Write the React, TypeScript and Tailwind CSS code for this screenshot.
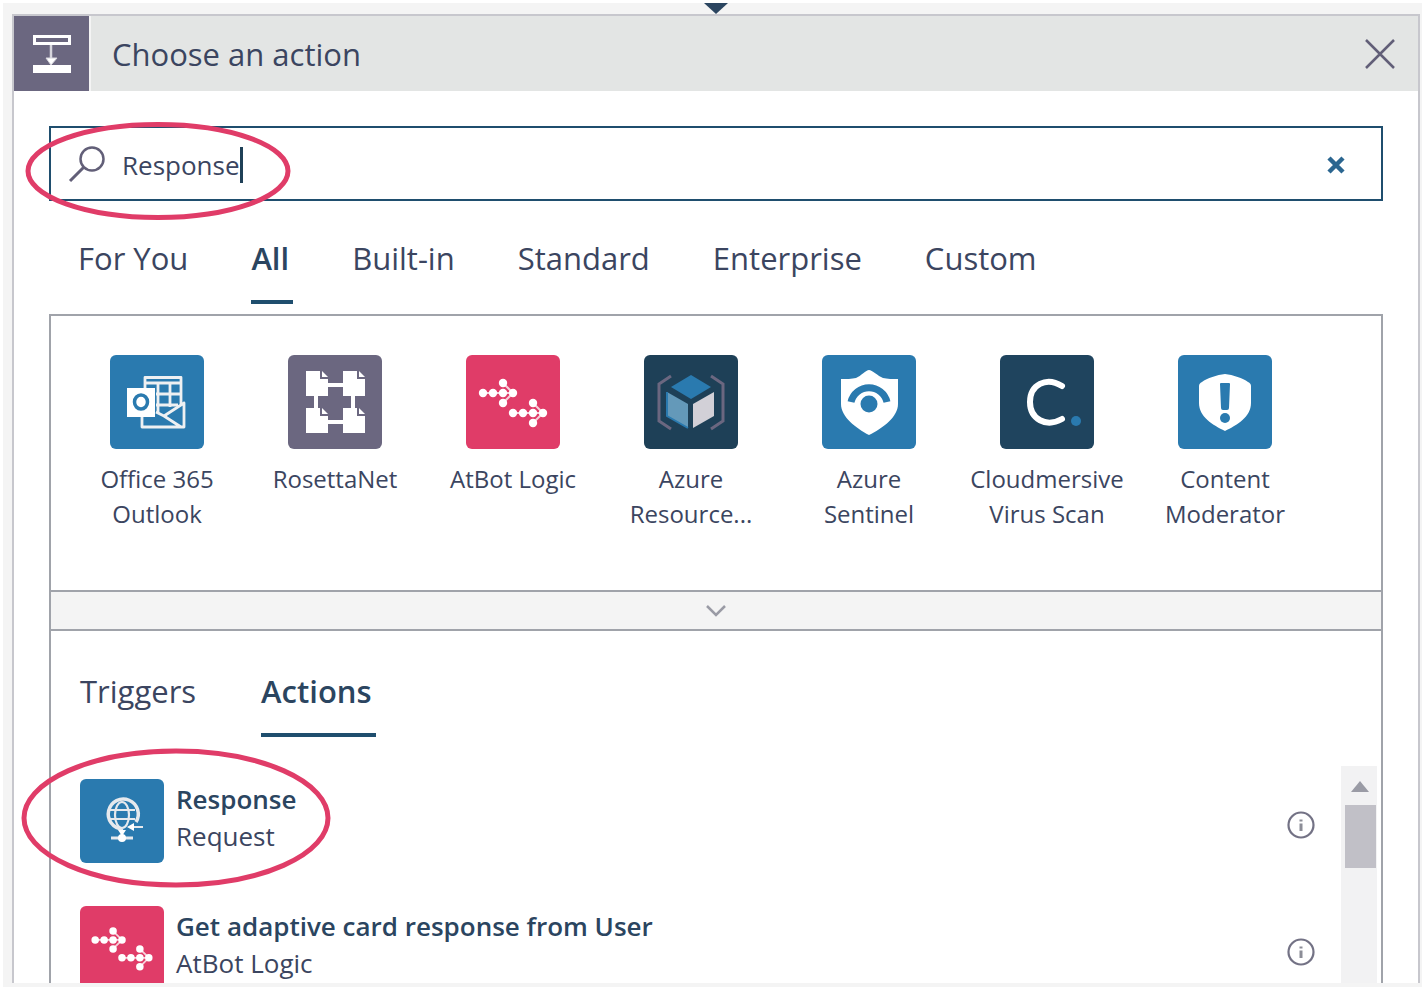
import { useState, type ReactNode } from "react";

const categories = ["For You", "All", "Built-in", "Standard", "Enterprise", "Custom"];

function AddStepIcon() {
  return (
    <svg viewBox="0 0 75 75" className="size-[75px]" fill="none" aria-hidden="true">
      <rect x="20.5" y="20.5" width="35" height="7" stroke="#fff" strokeWidth="3" />
      <path d="M37 29v15" stroke="#d6d5dc" strokeWidth="2.5" />
      <path d="M32 42h11l-6 7z" fill="#fff" stroke="#d6d5dc" />
      <path d="M19 49h38v8H19z" fill="#fff" />
    </svg>
  );
}

function OutlookIcon() {
  return (
    <svg viewBox="0 0 94 94" className="size-full" fill="none" aria-hidden="true">
      <g stroke="#eef0f2" strokeWidth="2.8" strokeLinejoin="round">
        <path d="M35 35V22.500h36V49" />
        <path d="M34 28h38M48 28v30M60 28v24M46 39h25M46 50h22" />
        <path d="M32 60v12h42V48L54 61l-8-4M54 61l17 11" />
      </g>
      <path d="M17 33h28v29H17z" fill="#fff" />
      <ellipse cx="31" cy="47" rx="6.500" ry="7" stroke="#2a7aaf" strokeWidth="3.500" />
    </svg>
  );
}

function RosettaIcon() {
  const pages = [
    [17, 16],
    [54, 16],
    [17, 53],
    [54, 53],
  ];
  return (
    <svg viewBox="0 0 94 94" className="size-full" fill="#fff" aria-hidden="true">
      <path d="M38 28h18v4H38zM38 65h18v4H38zM26 40h4v15h-4zM63 40h4v15h-4z" />
      {pages.map(([x, y]) => (
        <g key={`${x}-${y}`} transform={`translate(${x} ${y})`}>
          <path d="M1 0h14v8h8v17H1z" />
          <path d="M17 0l6 6h-6z" />
        </g>
      ))}
    </svg>
  );
}

function AtBotIcon() {
  const dots = [
    [17, 38],
    [27, 38],
    [37, 38],
    [47, 38],
    [37, 28],
    [37, 48],
    [47, 58],
    [57, 58],
    [67, 58],
    [77, 58],
    [67, 48],
    [67, 68],
  ];
  return (
    <svg viewBox="0 0 94 94" className="size-full" fill="none" aria-hidden="true">
      <path
        d="M17 38h30M37 28l10 10-10 10M47 58h30M67 48l10 10-10 10"
        stroke="#f6d3dc"
        strokeWidth="2"
      />
      {dots.map(([x, y]) => (
        <circle key={`${x}-${y}`} cx={x} cy={y} r="4.200" fill="#fff" />
      ))}
    </svg>
  );
}

function ResourceIcon() {
  return (
    <svg viewBox="0 0 94 94" className="size-full" fill="none" aria-hidden="true">
      <path d="M27 21L15 29v37l12 8M67 21l12 8v37l-12 8" stroke="#6b6780" strokeWidth="3" />
      <path d="M47 20l20 12-20 12-20-12z" fill="#2a7aaf" />
      <path d="M23 37l21 12v24L23 61z" fill="#6499b9" />
      <path d="M23 37v24l21 12" stroke="#2a7aaf" strokeWidth="2" />
      <path d="M70 37L49 49v24l21-12z" fill="#d2d0d7" />
    </svg>
  );
}

function SentinelIcon() {
  return (
    <svg viewBox="0 0 94 94" className="size-full" fill="none" aria-hidden="true">
      <path
        d="M47 15c3 0 9 6 14 8 4 1 10 1 15 1v25c0 13-15 24-29 31C34 73 19 62 19 49V24c5 0 11 0 15-1 5-2 10-8 13-8z"
        fill="#fff"
      />
      <path d="M29 47a18.500 18.500 0 0 1 36 0" stroke="#2a7aaf" strokeWidth="7" />
      <circle cx="47" cy="49" r="8.500" fill="#2a7aaf" />
    </svg>
  );
}

function CloudmersiveIcon() {
  return (
    <svg viewBox="0 0 94 94" className="size-full" fill="none" aria-hidden="true">
      <path
        d="M62 31C46 21 30 30 30 47s16 26 32 17"
        stroke="#fff"
        strokeWidth="6"
        strokeLinecap="round"
      />
      <circle cx="76" cy="66" r="5" fill="#2a7aaf" />
    </svg>
  );
}

function ModeratorIcon() {
  return (
    <svg viewBox="0 0 94 94" className="size-full" fill="none" aria-hidden="true">
      <path
        d="M47 19c8 1 18 4 23 8 2 1 3 2 3 4v17c0 14-14 22-26 28-12-6-26-14-26-28V31c0-2 1-3 3-4 5-4 15-7 23-8z"
        fill="#fff"
      />
      <path d="M42 29q0-1 1-1h8q1 0 1 1l-1 24q0 2-2 2h-4q-2 0-2-2z" fill="#2a7aaf" />
      <circle cx="47" cy="63" r="5" fill="#2a7aaf" />
    </svg>
  );
}

function RequestIcon() {
  return (
    <svg viewBox="0 0 84 84" className="size-full" fill="none" aria-hidden="true">
      <g stroke="#e6e9ed" strokeWidth="2.200">
        <path d="M56 43a15 15 0 1 0-14 7" strokeWidth="3.500" />
        <ellipse cx="42" cy="36" rx="7" ry="13" />
        <path d="M30 31h25M29 40h26" />
        <path d="M31 59h22" strokeWidth="3" />
        <path d="M42 50v8M50 48h13" />
      </g>
      <path d="M47 48l7-4v8zM38 51h8l-4 6z" fill="#fff" />
      <circle cx="42" cy="59" r="4" fill="#fff" />
    </svg>
  );
}

function InfoIcon() {
  return (
    <svg viewBox="0 0 28 28" className="size-7" fill="none" aria-hidden="true">
      <circle cx="14" cy="14" r="12.500" stroke="#737285" strokeWidth="2.200" />
      <path d="M14 12.500V20M14 8.500v2" stroke="#8c8d97" strokeWidth="3" />
    </svg>
  );
}

type Connector = { name: string; tile: string; icon: ReactNode };

const connectors: Connector[] = [
  { name: "Office 365 Outlook", tile: "bg-[#2a7aaf]", icon: <OutlookIcon /> },
  { name: "RosettaNet", tile: "bg-[#6b6780]", icon: <RosettaIcon /> },
  { name: "AtBot Logic", tile: "bg-[#e03c68]", icon: <AtBotIcon /> },
  { name: "Azure Resource...", tile: "bg-[#1e4057]", icon: <ResourceIcon /> },
  { name: "Azure Sentinel", tile: "bg-[#2a7aaf]", icon: <SentinelIcon /> },
  { name: "Cloudmersive Virus Scan", tile: "bg-[#1f445e]", icon: <CloudmersiveIcon /> },
  { name: "Content Moderator", tile: "bg-[#2a7aaf]", icon: <ModeratorIcon /> },
];

const actions = [
  { title: "Response", source: "Request", tile: "bg-[#2a7aaf]", icon: <RequestIcon /> },
  {
    title: "Get adaptive card response from User",
    source: "AtBot Logic",
    tile: "bg-[#e03c68]",
    icon: <AtBotIcon />,
  },
];

function Tab({
  label,
  active,
  onSelect,
}: {
  label: string;
  active: boolean;
  onSelect: () => void;
}) {
  const tone = active
    ? "border-[#1f4e6e] font-semibold text-[#2b4560]"
    : "border-transparent";
  return (
    <button
      type="button"
      role="tab"
      aria-selected={active}
      onClick={onSelect}
      className={`border-b-4 pr-1 pb-5 text-left leading-[44px] whitespace-nowrap ${tone}`}
    >
      {label}
    </button>
  );
}

export default function App() {
  const [query, setQuery] = useState("Response");
  const [category, setCategory] = useState("All");
  const [kind, setKind] = useState("Actions");

  return (
    <div className="flex h-screen bg-white p-[3px] font-['Open_Sans','Noto_Sans',sans-serif] text-[#3b4560]">
      <div className="flex min-w-0 flex-1 flex-col bg-[#f4f4f4] pr-[2px] pb-1 pl-[9px]">
        <div className="flex h-[11px] shrink-0 justify-center">
          <svg viewBox="0 0 24 11" className="h-[11px] w-6" aria-hidden="true">
            <path d="M0 0h24L12 11z" fill="#2b4560" />
          </svg>
        </div>

        <main className="flex min-h-0 flex-1 flex-col overflow-hidden border-2 border-b-0 border-[#c7c7cd] bg-white">
          <header className="flex h-[75px] shrink-0 items-center bg-[#e3e5e4]">
            <div className="mr-[21px] border-r-2 border-[#f4f4f4] bg-[#6b6780]">
              <AddStepIcon />
            </div>
            <h1 className="flex-1 text-[31px] leading-[44px]">Choose an action</h1>
            <button type="button" aria-label="Close" className="mr-[22px]">
              <svg viewBox="0 0 32 32" className="size-8" fill="none" aria-hidden="true">
                <path d="M2 2l28 28M30 2L2 30" stroke="#625f78" strokeWidth="2.500" />
              </svg>
            </button>
          </header>

          <div className="flex min-h-0 flex-1 flex-col px-[35px] pt-[35px]">
            <div className="relative">
              <label className="flex h-[75px] items-center border-2 border-[#1f4e6e] pt-[2px] pr-9 pl-[17px]">
                <svg viewBox="0 0 38 38" className="size-[38px]" fill="none" aria-hidden="true">
                  <circle cx="24" cy="13" r="11.500" stroke="#625f78" strokeWidth="2.500" />
                  <path d="M16 21L2 35" stroke="#625f78" strokeWidth="3" />
                </svg>
                <input
                  type="text"
                  aria-label="Search connectors and actions"
                  value={query}
                  onChange={(e) => setQuery(e.target.value)}
                  className="field-sizing-content ml-4 bg-transparent text-[26px] leading-[40px] caret-transparent outline-none"
                />
                <span className="h-9 w-[3px] bg-[#1f4057]" />
                <button
                  type="button"
                  aria-label="Clear search"
                  onClick={() => setQuery("")}
                  className="ml-auto"
                >
                  <svg viewBox="0 0 18 18" className="size-[18px]" fill="none" aria-hidden="true">
                    <path d="M2 2l14 14M16 2L2 16" stroke="#2b6690" strokeWidth="4.500" />
                  </svg>
                </button>
              </label>
              <svg
                viewBox="0 0 266 100"
                className="pointer-events-none absolute -top-[5px] -left-6 h-[100px] w-[266px]"
                fill="none"
                aria-hidden="true"
              >
                <ellipse cx="133" cy="50" rx="130" ry="46.500" stroke="#e03c68" strokeWidth="5" />
              </svg>
            </div>

            <div role="tablist" className="flex gap-[59px] px-[29px] pt-[35px] pb-[10px] text-[31px]">
              {categories.map((c) => (
                <Tab key={c} label={c} active={c === category} onSelect={() => setCategory(c)} />
              ))}
            </div>

            <section className="flex min-h-0 flex-1 flex-col border-2 border-b-0 border-[#a0a3aa]">
              <ul className="flex h-[274px] shrink-0 px-[17px] pt-[39px]">
                {connectors.map((c) => (
                  <li key={c.name} className="w-[178px]">
                    <button type="button" className="flex w-full flex-col items-center gap-3">
                      <span className={`size-[94px] overflow-hidden rounded-md ${c.tile}`}>
                        {c.icon}
                      </span>
                      <span className="w-40 text-[24px] leading-[35px]">{c.name}</span>
                    </button>
                  </li>
                ))}
              </ul>

              <button
                type="button"
                aria-label="Collapse connectors"
                className="flex h-[41px] shrink-0 items-center justify-center border-y-2 border-[#a0a3aa] bg-[#f4f4f4]"
              >
                <svg viewBox="0 0 20 12" className="h-3 w-5" fill="none" aria-hidden="true">
                  <path d="M1 1l9 9 9-9" stroke="#9a9ba5" strokeWidth="2.500" />
                </svg>
              </button>

              <div role="tablist" className="flex gap-[61px] px-[29px] pt-[38px] pb-[29px] text-[31px]">
                {["Triggers", "Actions"].map((k) => (
                  <Tab key={k} label={k} active={k === kind} onSelect={() => setKind(k)} />
                ))}
              </div>

              <div className="relative min-h-0 flex-1">
                <div className="flex h-full overflow-hidden pr-1">
                  <ul className="flex-1 pt-[13px] pr-[26px] pl-[29px]">
                    {actions.map((a) => (
                      <li key={a.title} className="flex h-[127px] items-start">
                        <button type="button" className="flex flex-1 items-center gap-3 text-left">
                          <span className={`size-[84px] overflow-hidden rounded-md ${a.tile}`}>
                            {a.icon}
                          </span>
                          <span className="pb-[6px] text-[26px] leading-[37px]">
                            <span className="block font-semibold text-[#2b4560]">{a.title}</span>
                            <span className="block">{a.source}</span>
                          </span>
                        </button>
                        <button type="button" aria-label={`About ${a.title}`} className="mt-8">
                          <InfoIcon />
                        </button>
                      </li>
                    ))}
                  </ul>
                  <div className="flex w-9 flex-col items-center bg-[#f2f2f3] pt-[15px] pl-[2px]">
                    <svg viewBox="0 0 18 11" className="h-[11px] w-[18px]" aria-hidden="true">
                      <path d="M9 0l9 11H0z" fill="#9a9ba5" />
                    </svg>
                    <div className="mt-[13px] h-[63px] w-[31px] bg-[#c1c0c7]" />
                  </div>
                </div>
                <svg
                  viewBox="0 0 310 140"
                  className="pointer-events-none absolute -top-[18px] -left-[30px] h-[140px] w-[310px]"
                  fill="none"
                  aria-hidden="true"
                >
                  <ellipse cx="155" cy="70" rx="152" ry="67" stroke="#e03c68" strokeWidth="5" />
                </svg>
              </div>
            </section>
          </div>
        </main>
      </div>
    </div>
  );
}
